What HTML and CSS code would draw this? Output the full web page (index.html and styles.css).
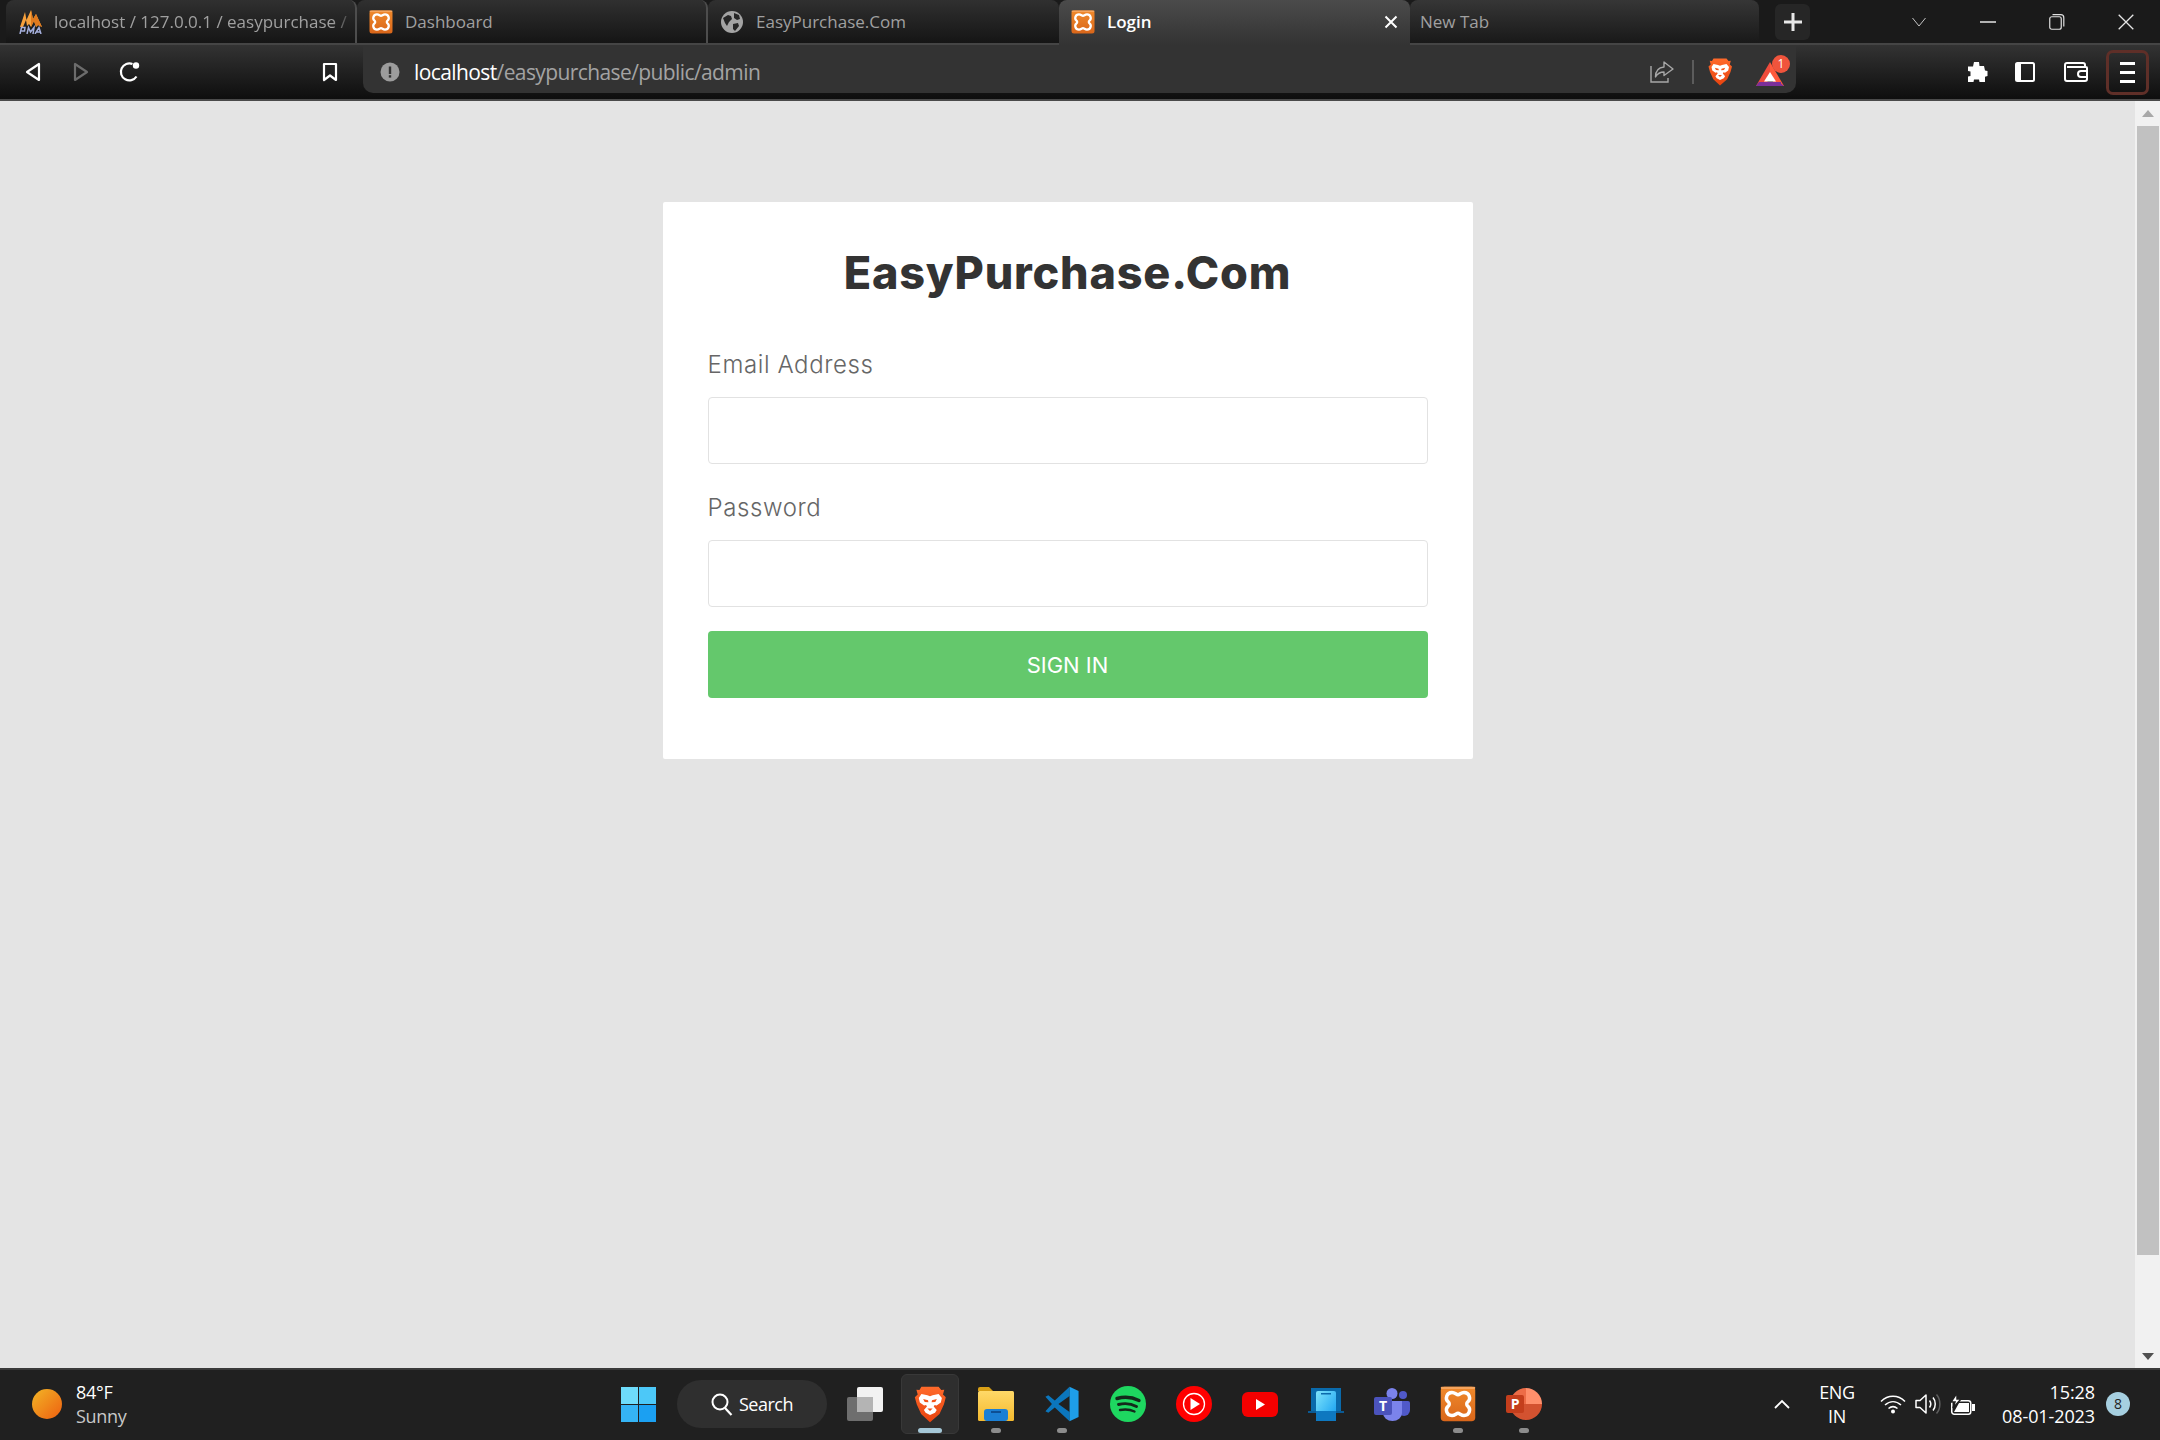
FILE: index.html
```html
<!DOCTYPE html>
<html lang="en">
<head>
<meta charset="utf-8">
<title>Login</title>
<link rel="stylesheet" href="styles.css">
</head>
<body>
<svg class="defs" width="0" height="0" aria-hidden="true">
  <defs>
    <linearGradient id="lionGrad" x1="0" y1="0" x2="0" y2="1"><stop offset="0" stop-color="#ff6a2b"/><stop offset="1" stop-color="#e8430f"/></linearGradient>
    <linearGradient id="sunGrad" x1="0" y1="0" x2="1" y2="1"><stop offset="0" stop-color="#f2b526"/><stop offset="1" stop-color="#ee5f10"/></linearGradient>
    <linearGradient id="winGrad" x1="0" y1="0" x2="1" y2="1"><stop offset="0" stop-color="#7fe4fb"/><stop offset="1" stop-color="#0f9bf0"/></linearGradient>
    <linearGradient id="xGrad" x1="0" y1="0" x2="0" y2="1"><stop offset="0" stop-color="#f08a2c"/><stop offset="1" stop-color="#d9661a"/></linearGradient>
    <linearGradient id="folderGrad" x1="0" y1="0" x2="0" y2="1"><stop offset="0" stop-color="#ffd968"/><stop offset="1" stop-color="#f4b92e"/></linearGradient>
    <symbol id="lion" viewBox="0 0 24 28">
      <path fill="url(#lionGrad)" d="M5.500 .5h13l2 2.500 2.300-.2-1 3.600 2.200 2.100-1.500 5.500-3.300 7.200L12 27.500l-6.700-6.300L2 14 .5 8.500l2.200-2.100-1-3.600L4 3z"/>
      <path fill="#fff" d="M5.500 6l4.500 1 2 .8 2-.8 4.500-1 2.500 3-.8 3.400-3.200 2.300-1.500-.4-.7 1.300 2.300 2.600-1.300 2L12 22l-3.300-1.800-1.300-2 2.300-2.600-.7-1.300-1.500.4-3.200-2.300L3.500 9z"/>
      <path fill="#f4551a" d="M6.800 9.800l3.700 1 .3 1.500-2.800-.2zM17.200 9.800l-3.700 1-.3 1.500 2.800-.2zM10 17h4l-2 1.900z"/>
    </symbol>
    <symbol id="xampp" viewBox="0 0 24 24">
      <rect x="0.500" y="0.500" width="23" height="23" rx="2.500" fill="url(#xGrad)"/>
      <rect x="0.500" y="0.500" width="23" height="1.500" rx="0.700" fill="#f6a45c"/>
      <path fill="none" stroke="#fff" stroke-width="2.300" stroke-linejoin="round" d="M8 4.300C10 4.300 10.800 5.800 12 5.800S14 4.300 16 4.300C19.800 4.300 20.800 8.800 18.500 10.600 17.600 11.300 17.600 12.700 18.500 13.400 20.800 15.200 19.800 19.700 16 19.700 14 19.700 13.200 18.200 12 18.200S10 19.700 8 19.700C4.200 19.700 3.200 15.200 5.500 13.400 6.400 12.700 6.400 11.300 5.500 10.600 3.200 8.800 4.200 4.300 8 4.300z"/>
    </symbol>
  </defs>
</svg>

<div class="browser">
  <div class="tabstrip">
    <div class="tab tab-sep">
      <svg class="favicon favicon-pma" width="26" height="24" viewBox="0 0 26 24">
        <path fill="#f7a13c" d="M2 17L7 2l1.500 8L13 0l2 9 3-5 6 13-4-2-2 2-2-6-3 6-2-3-2 2-1-6-3 7z"/>
        <path fill="#e07a1e" d="M13 0l2 9 3-5 6 13-4-2-2 2-2-6-3 6z"/>
        <path stroke="#a5afdc" stroke-width="1.500" fill="none" d="M2 24l1.500-6.500H7L6.500 21H3.500M9 24l1.500-6.500 2 4.500 3.500-4.500L15 24M17 24l4-6.500 2 6.500M18.500 22h4"/>
      </svg>
      <span class="tab-label tab-fade">localhost / 127.0.0.1 / easypurchase / </span>
    </div>
    <div class="tab tab-sep">
      <svg class="favicon" width="24" height="24"><use href="#xampp"/></svg>
      <span class="tab-label">Dashboard</span>
    </div>
    <div class="tab">
      <svg class="favicon" width="24" height="24" viewBox="0 0 24 24">
        <circle cx="12" cy="12" r="11" fill="#a4a4a4"/>
        <path fill="#262626" d="M3 8l5-3 3 1 1 3-3 3-2 4-2-3zM14 3l5 2 1 4-3 1-3-2zM13 14l5-1 1 3-4 5-2-2z"/>
      </svg>
      <span class="tab-label">EasyPurchase.Com</span>
    </div>
    <div class="tab tab-active">
      <svg class="favicon" width="24" height="24"><use href="#xampp"/></svg>
      <span class="tab-label">Login</span>
      <svg class="tab-close" width="14" height="14" viewBox="0 0 14 14"><path stroke="#fff" stroke-width="2" d="M1.500 1.500l11 11M12.500 1.500l-11 11"/></svg>
    </div>
    <div class="tab tab-new">
      <span class="tab-label">New Tab</span>
    </div>
    <div class="new-tab-btn">
      <svg width="20" height="20" viewBox="0 0 20 20"><path stroke="#e8e8e8" stroke-width="3" d="M10 1v18M1 10h18"/></svg>
    </div>
    <div class="window-controls">
      <div class="win-btn"><svg width="16" height="10" viewBox="0 0 16 10"><path fill="none" stroke="#c4c4c4" d="M1.500 1l6.500 8 6.500-8"/></svg></div>
      <div class="win-btn"><svg width="16" height="2" viewBox="0 0 16 2"><path stroke="#e6e6e6" stroke-width="1.500" d="M0 1h16"/></svg></div>
      <div class="win-btn"><svg width="16" height="16" viewBox="0 0 16 16"><rect x="0.750" y="2.750" width="11.500" height="12.500" rx="2" fill="none" stroke="#e0e0e0" stroke-width="1.200"/><path fill="none" stroke="#e0e0e0" stroke-width="1.200" d="M3.500.7h8.300a3 3 0 0 1 3 3v8.800"/></svg></div>
      <div class="win-btn"><svg width="16" height="16" viewBox="0 0 16 16"><path stroke="#e6e6e6" stroke-width="1.300" d="M.7.700l14.600 14.600M15.300.7L.7 15.300"/></svg></div>
    </div>
  </div>

  <div class="toolbar">
    <div class="tool-btn"><svg width="16" height="20" viewBox="0 0 16 20"><path fill="none" stroke="#fff" stroke-width="2.200" stroke-linejoin="round" d="M14 2v16L2 10z"/></svg></div>
    <div class="tool-btn"><svg width="16" height="20" viewBox="0 0 16 20"><path fill="none" stroke="#6c6c6c" stroke-width="2.200" stroke-linejoin="round" d="M2 2v16l12-8z"/></svg></div>
    <div class="tool-btn tool-reload"><svg width="22" height="22" viewBox="0 0 22 22"><path fill="none" stroke="#fff" stroke-width="2.200" d="M17.500 15.500A8.500 8.500 0 1 1 13.500 3"/><circle cx="17" cy="4.500" r="3.200" fill="#fff"/></svg></div>
    <div class="tool-btn tool-bookmark"><svg width="16" height="20" viewBox="0 0 16 20"><path fill="none" stroke="#fff" stroke-width="2.200" stroke-linejoin="round" d="M2 2h12v16l-6-4.500L2 18z"/></svg></div>
    <div class="address-bar">
      <svg class="addr-info" width="20" height="20" viewBox="0 0 20 20"><circle cx="10" cy="10" r="9.500" fill="#9c9c9c"/><rect x="8.800" y="4.500" width="2.400" height="7.500" fill="#333"/><rect x="8.800" y="13.200" width="2.400" height="2.400" fill="#333"/></svg>
      <span class="url"><span class="url-host">localhost</span>/easypurchase/public/admin</span>
      <svg class="addr-share" width="24" height="22" viewBox="0 0 24 22"><path fill="none" stroke="#a8a8a8" stroke-width="1.400" d="M1 5v16h17v-4"/><path fill="none" stroke="#a8a8a8" stroke-width="1.400" stroke-linejoin="round" d="M14 1l9 7-9 6.500V11c-4 0-6.500 1.500-8.500 5 0-6 3-9.500 8.500-10z"/></svg>
      <span class="addr-sep"></span>
      <svg class="addr-lion" width="24" height="28"><use href="#lion"/></svg>
      <svg class="addr-bat" width="38" height="34" viewBox="0 0 38 34">
        <path fill="#ef4b3c" d="M16 7L2 31h9l5-9z"/>
        <path fill="#ff5a3c" d="M16 7l14 24h-8l-6-9z"/>
        <path fill="#7b2f9a" d="M5 27h22v1.500l3 2.500H2z"/>
        <path fill="#fff" d="M16 17l6 9.500H10z"/>
        <circle cx="27" cy="9" r="9" fill="#f0543c"/>
        <text x="27" y="13" class="bat-count">1</text>
      </svg>
    </div>
    <div class="tool-btn tool-puzzle"><svg width="22" height="22" viewBox="0 0 22 22"><path fill="#fff" d="M8 1h5l.5 4H18l1 4.500 2.500.5v5l-2.500.7V21h-5.500l-.5-2.500h-5L7.500 21H2v-5.500l2.500-.5v-4.500L2 10V5.500h5z"/></svg></div>
    <div class="tool-btn"><svg width="20" height="20" viewBox="0 0 20 20"><rect x="1" y="1" width="18" height="18" rx="1.500" fill="none" stroke="#fff" stroke-width="2"/><rect x="1" y="1" width="5" height="18" fill="#fff"/></svg></div>
    <div class="tool-btn tool-wallet"><svg width="24" height="20" viewBox="0 0 24 20"><path fill="none" stroke="#fff" stroke-width="2" d="M3 5h19a1 1 0 0 1 1 1v11a2 2 0 0 1-2 2H3a2 2 0 0 1-2-2V3a2 2 0 0 1 2-2h16a2 2 0 0 1 2 2v2"/><path fill="none" stroke="#fff" stroke-width="2" d="M23 9h-6a2.500 2.500 0 0 0 0 6h6"/></svg></div>
    <div class="menu-btn">
      <span class="menu-line"></span><span class="menu-line"></span><span class="menu-line"></span>
    </div>
  </div>
</div>

<div class="viewport">
  <main class="page">
    <section class="card">
      <h1 class="brand">EasyPurchase.Com</h1>
      <form class="form">
        <label class="field-label" for="email">Email Address</label>
        <input class="field-input" id="email" type="email">
        <label class="field-label" for="password">Password</label>
        <input class="field-input" id="password" type="password">
        <button class="submit" type="button">SIGN IN</button>
      </form>
    </section>
  </main>
  <aside class="scrollbar">
    <span class="arrow arrow-up"></span>
    <span class="thumb"></span>
    <span class="arrow arrow-down"></span>
  </aside>
</div>

<footer class="taskbar">
  <div class="weather">
    <svg width="30" height="30" viewBox="0 0 30 30"><circle cx="15" cy="15" r="15" fill="url(#sunGrad)"/></svg>
    <div class="weather-text"><span class="temp">84°F</span><span class="sky">Sunny</span></div>
  </div>
  <div class="center">
    <svg class="win-logo" width="35" height="35" viewBox="0 0 35 35">
      <rect width="17" height="17" y="0" x="0" fill="#6edcfb"/><rect width="17" height="17" y="0" x="18" fill="#4cc8f8"/>
      <rect width="17" height="17" y="18" x="0" fill="#35b4f5"/><rect width="17" height="17" y="18" x="18" fill="#1ba0f2"/>
    </svg>
    <div class="search-pill">
      <svg width="22" height="23" viewBox="0 0 22 23"><circle cx="9" cy="9" r="7.500" fill="none" stroke="#fff" stroke-width="2"/><path stroke="#fff" stroke-width="2.200" d="M14 15l6.500 7"/></svg>
      <span>Search</span>
    </div>
    <svg class="taskview" width="36" height="34" viewBox="0 0 36 34">
      <rect x="0" y="10" width="26" height="24" rx="2" fill="#6e6e6e"/>
      <rect x="10" y="0" width="26" height="25" rx="2" fill="#f2f2f2"/>
      <rect x="10" y="10" width="16" height="15" fill="#b4b4b4"/>
    </svg>
    <div class="app app-active">
      <svg width="32" height="37" viewBox="0 0 24 28"><use href="#lion"/></svg>
      <span class="dot dot-active"></span>
    </div>
    <div class="app">
      <svg width="36" height="34" viewBox="0 0 36 34">
        <path fill="#d9a016" d="M0 2a2 2 0 0 1 2-2h9l4 4h-15z"/>
        <rect y="4" width="36" height="30" rx="1.500" fill="url(#folderGrad)"/>
        <rect x="6" y="22" width="24" height="12" rx="3" fill="#1b7fd4"/>
        <rect x="13" y="24" width="10" height="2" fill="#0d4f94"/>
      </svg>
      <span class="dot"></span>
    </div>
    <div class="app">
      <svg width="36" height="36" viewBox="0 0 100 100">
        <path fill="#0b76bd" d="M71 2L30 40 12 26l-8 4 18 20L4 70l8 4 18-14 41 38V72L40 50l31-22z"/>
        <path fill="#1e9ee8" d="M71 2l25 12v72L71 98z"/>
      </svg>
      <span class="dot"></span>
    </div>
    <div class="app">
      <svg width="36" height="36" viewBox="0 0 36 36">
        <circle cx="18" cy="18" r="18" fill="#1ed760"/>
        <path fill="none" stroke="#14291b" stroke-width="3.400" stroke-linecap="round" d="M7 12.500c7-2 15-1.500 22 2"/>
        <path fill="none" stroke="#14291b" stroke-width="2.900" stroke-linecap="round" d="M8.500 18.500c6-1.500 12.500-1 18 2"/>
        <path fill="none" stroke="#14291b" stroke-width="2.400" stroke-linecap="round" d="M10 24c5-1 10-.7 14.500 1.500"/>
      </svg>
    </div>
    <div class="app">
      <svg width="36" height="36" viewBox="0 0 36 36">
        <circle cx="18" cy="18" r="18" fill="#f00"/>
        <circle cx="18" cy="18" r="10.500" fill="none" stroke="#fff" stroke-width="1.300"/>
        <path fill="#fff" d="M14.500 12l9.500 6-9.500 6z"/>
      </svg>
    </div>
    <div class="app">
      <svg width="36" height="25" viewBox="0 0 36 25">
        <rect width="36" height="25" rx="6" fill="#f40000"/>
        <path fill="#fff" d="M14 7l9 5.500-9 5.500z"/>
      </svg>
    </div>
    <div class="app">
      <svg width="36" height="33" viewBox="0 0 36 33">
        <path fill="#0a6aab" d="M3 0h30v23H3z"/>
        <path fill="#0a5a94" d="M0 23h36v2H0z"/>
        <rect x="8" y="3" width="20" height="30" rx="2" fill="url(#winGrad)"/>
        <rect x="13" y="5" width="10" height="1.500" fill="#0a6aab"/>
        <rect x="8" y="23" width="20" height="10" fill="#0e78c0"/>
      </svg>
    </div>
    <div class="app">
      <svg width="36" height="33" viewBox="0 0 36 33">
        <circle cx="18" cy="5.500" r="5.500" fill="#7b83eb"/>
        <circle cx="29" cy="7" r="4" fill="#5059c9"/>
        <path fill="#5059c9" d="M24 13h10a2 2 0 0 1 2 2v7a6 6 0 0 1-12 0z"/>
        <path fill="#7b83eb" d="M9 13h19v12a9.500 8 0 0 1-19 0z"/>
        <rect y="9" width="18" height="18" rx="2" fill="#4b53bc"/>
        <text x="9" y="23" class="app-letter">T</text>
      </svg>
    </div>
    <div class="app">
      <svg width="36" height="36"><use href="#xampp"/></svg>
      <span class="dot"></span>
    </div>
    <div class="app">
      <svg width="36" height="32" viewBox="0 0 36 32">
        <path fill="#ed6c47" d="M20 0a16 16 0 0 0-16 16h16z"/>
        <path fill="#ff8f6b" d="M20 0a16 16 0 0 1 16 16H20z"/>
        <path fill="#d35230" d="M36 16a16 16 0 0 1-32 0z"/>
        <rect y="7" width="18" height="18" rx="2" fill="#c43e1c"/>
        <text x="9" y="21" class="app-letter">P</text>
      </svg>
      <span class="dot"></span>
    </div>
  </div>
  <div class="tray">
    <div class="tray-item tray-chevron"><svg width="16" height="10" viewBox="0 0 16 10"><path fill="none" stroke="#fff" stroke-width="1.800" d="M1 9l7-7 7 7"/></svg></div>
    <div class="lang"><span>ENG</span><span>IN</span></div>
    <div class="tray-item"><svg width="26" height="20" viewBox="0 0 26 20"><path fill="none" stroke="#fff" stroke-width="1.500" d="M1 7.500c7-7 17-7 24 0M5 11c5-4.500 11-4.500 16 0M8.500 14.500c3-2.500 6-2.500 9 0"/><circle cx="13" cy="17.500" r="2" fill="#fff"/></svg></div>
    <div class="tray-item"><svg width="26" height="22" viewBox="0 0 26 22"><path fill="none" stroke="#fff" stroke-width="1.500" stroke-linejoin="round" d="M1 7.500v7h4l6 5.500V2L5 7.500z"/><path fill="none" stroke="#fff" stroke-width="1.500" d="M14.500 7.500c1.500 2 1.500 5 0 7M18 4.500c3 3.500 3 9.500 0 13"/><path fill="none" stroke="#5e5e5e" stroke-width="1.500" d="M21.500 1.500c4.500 5 4.500 14 0 19"/></svg></div>
    <div class="tray-item"><svg width="26" height="22" viewBox="0 0 26 22"><rect x="1.750" y="7.750" width="19" height="13.500" rx="2.500" fill="none" stroke="#fff" stroke-width="1.500"/><path fill="#fff" d="M22 11h3v7h-3zM9 10h10v9H4z"/><path fill="#fff" stroke="#202020" stroke-width="1.500" d="M7 0L1 9h4l-2 6 8-9H7z"/></svg></div>
    <div class="clock"><span>15:28</span><span>08-01-2023</span></div>
    <div class="notif">8</div>
  </div>
</footer>
</body>
</html>
```

FILE: styles.css
```css
* { box-sizing: border-box; }
html, body { margin: 0; padding: 0; }
body {
  width: 2160px;
  height: 1440px;
  overflow: hidden;
  display: flex;
  flex-direction: column;
  background: #e4e4e4;
  font-family: "Open Sans", "Noto Sans", sans-serif;
}
.defs { position: absolute; }

/* browser chrome */
.browser { flex: none; }
.tabstrip {
  height: 45px;
  display: flex;
  padding-left: 6px;
  background: #1a1a1a;
  border-bottom: 2px solid #454545;
}
.tab {
  width: 351px;
  height: 43px;
  display: flex;
  align-items: center;
  padding-left: 12px;
  border-radius: 8px 8px 0 0;
  background: linear-gradient(#303030, #151515);
  color: #a0a0a0;
  font-size: 17px;
  flex: none;
}
.tab-sep { border-right: 2px solid #4d4d4d; }
.tab:first-child .tab-label { width: 296px; }
.tab-active {
  height: 45px;
  padding-bottom: 2px;
  background: linear-gradient(#4b4b4b, #333333);
  color: #fff;
  font-weight: 600;
}
.tab-new {
  width: 349px;
  padding-left: 10px;
  background: linear-gradient(#363636, #191919);
}
.favicon { flex: none; margin-right: 12px; }
.favicon-pma { margin-right: 10px; }
.tab-label { white-space: nowrap; overflow: hidden; }
.tab-fade {
  -webkit-mask-image: linear-gradient(90deg, #000 94%, rgba(0,0,0,.2) 100%);
  mask-image: linear-gradient(90deg, #000 94%, rgba(0,0,0,.2) 100%);
}
.tab-close { margin-left: auto; margin-right: 12px; }
.new-tab-btn {
  width: 35px;
  height: 36px;
  margin: 4px 0 0 16px;
  display: flex;
  align-items: center;
  justify-content: center;
  background: #262626;
  border-radius: 6px;
}
.window-controls { margin-left: auto; display: flex; }
.win-btn {
  width: 69px;
  height: 43px;
  display: flex;
  align-items: center;
  justify-content: center;
}
.toolbar {
  height: 56px;
  display: flex;
  align-items: center;
  background: linear-gradient(#333333, #0e0e0e);
  border-bottom: 2px solid #4a4a4a;
  padding-left: 9px;
}
.tool-btn {
  width: 48px;
  height: 48px;
  flex: none;
  display: flex;
  align-items: center;
  justify-content: center;
}
.tool-reload { margin-left: 1px; }
.tool-bookmark { margin-left: 152px; }
.tool-puzzle { margin-left: 157px; }
.tool-wallet { margin-left: 3px; }
.address-bar {
  width: 1433px;
  height: 48px;
  align-self: flex-start;
  margin-left: 9px;
  padding: 6px 12px 0 17px;
  display: flex;
  align-items: center;
  background: #333333;
  border-radius: 0 0 10px 10px;
  color: #a3a3a3;
  font-size: 21px;
  letter-spacing: -0.6px;
}
.addr-info { flex: none; }
.url { margin-left: 14px; }
.url-host { color: #fff; }
.addr-share { margin-left: auto; }
.addr-sep {
  width: 2px;
  height: 24px;
  margin: 0 15px 0 18px;
  background: #5c5c5c;
}
.addr-lion { margin-left: -1px; }
.addr-bat { margin-left: 22px; margin-right: -8px; }
.bat-count {
  fill: #fff;
  font-size: 12px;
  text-anchor: middle;
  letter-spacing: 0;
}
.menu-btn {
  width: 43px;
  height: 45px;
  margin-left: 6px;
  display: flex;
  flex-direction: column;
  align-items: center;
  justify-content: center;
  gap: 6px;
  border: 3px solid #5f2f28;
  border-radius: 7px;
}
.menu-line { width: 15px; height: 3px; background: #fff; }

/* page */
.viewport { flex: 1; min-height: 0; display: flex; }
.page { flex: 1; background: #e4e4e4; padding-top: 101px; }
.card {
  width: 810px;
  height: 557px;
  margin: 0 auto;
  padding: 44px 45px 60px;
  background: #fff;
  border-radius: 2px;
  font-family: Inter, "Open Sans", sans-serif;
}
.brand {
  margin: 0 0 45px;
  height: 54px;
  line-height: 54px;
  text-align: center;
  color: #333;
  font-size: 45px;
  font-weight: 800;
  letter-spacing: 0.8px;
}
.form { display: flex; flex-direction: column; }
.field-label {
  height: 40px;
  line-height: 40px;
  margin-bottom: 12px;
  color: #666;
  font-size: 24px;
  font-weight: 300;
  letter-spacing: 0.6px;
}
.field-input {
  height: 67px;
  margin-bottom: 24px;
  background: #fff;
  border: 1px solid #e2e2e2;
  border-radius: 4px;
}
.submit {
  height: 67px;
  border: 0;
  border-radius: 4px;
  background: #64c86c;
  color: #fff;
  font-family: inherit;
  font-size: 22px;
}
.scrollbar {
  width: 25px;
  background: #f1f1f1;
  display: flex;
  flex-direction: column;
  align-items: center;
  padding: 9px 0 8px;
}
.arrow { width: 0; height: 0; border-left: 6px solid transparent; border-right: 6px solid transparent; flex: none; }
.arrow-up { border-bottom: 7px solid #a8a8a8; }
.arrow-down { border-top: 7px solid #505050; margin-top: auto; }
.thumb { width: 22px; height: 1129px; margin-top: 9px; background: #c1c1c1; }

/* taskbar */
.taskbar {
  height: 72px;
  flex: none;
  display: flex;
  align-items: center;
  padding-bottom: 2px;
  background: #202020;
  border-top: 2px solid #3a3a3a;
  color: #fff;
  font-size: 18px;
  letter-spacing: -0.3px;
}
.weather {
  width: 621px;
  flex: none;
  display: flex;
  align-items: center;
  padding-left: 32px;
}
.weather-text { display: flex; flex-direction: column; margin-left: 14px; line-height: 24px; }
.sky { color: #c8c8c8; }
.center { display: flex; align-items: center; }
.search-pill {
  width: 150px;
  height: 48px;
  margin-left: 21px;
  padding-left: 34px;
  display: flex;
  align-items: center;
  gap: 6px;
  background: #2f2f2f;
  border-radius: 24px;
  letter-spacing: -0.5px;
}
.taskview { margin-left: 20px; margin-right: 14px; }
.app {
  width: 66px;
  height: 60px;
  display: flex;
  align-items: center;
  justify-content: center;
  position: relative;
}
.app-active::before {
  content: "";
  position: absolute;
  inset: 0 4px;
  background: #2e2e2e;
  border: 1px solid #383838;
  border-radius: 6px;
}
.app-active svg { position: relative; }
.dot {
  position: absolute;
  left: 50%;
  bottom: 1px;
  width: 10px;
  height: 5px;
  margin-left: -5px;
  border-radius: 3px;
  background: #8c8c8c;
}
.dot-active { width: 24px; margin-left: -12px; background: #a5c8d8; }
.app-letter {
  fill: #fff;
  font-family: "Open Sans", sans-serif;
  font-size: 14px;
  font-weight: 700;
  text-anchor: middle;
}
.tray { margin-left: auto; padding-right: 30px; display: flex; align-items: center; }
.tray-item { width: 35px; display: flex; justify-content: center; }
.tray-chevron { width: 44px; }
.lang {
  width: 66px;
  margin-right: 5px;
  display: flex;
  flex-direction: column;
  align-items: center;
  line-height: 24px;
}
.clock {
  width: 115px;
  margin-right: 11px;
  display: flex;
  flex-direction: column;
  align-items: flex-end;
  line-height: 24px;
  letter-spacing: -0.1px;
}
.notif {
  width: 24px;
  height: 24px;
  border-radius: 50%;
  background: #a6cfe0;
  color: #222;
  font-size: 14px;
  line-height: 24px;
  text-align: center;
  letter-spacing: 0;
}
```
